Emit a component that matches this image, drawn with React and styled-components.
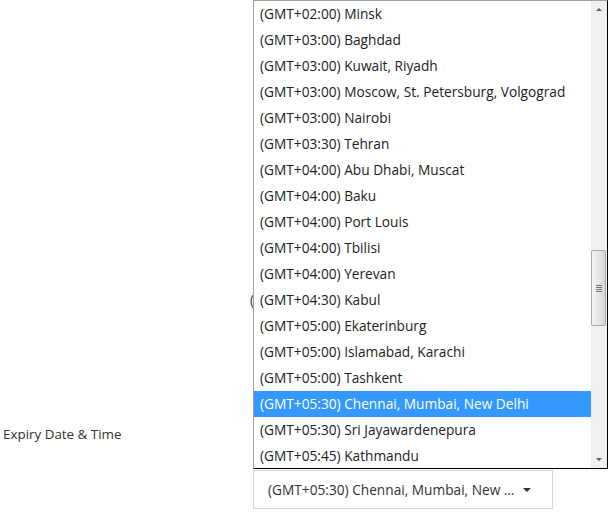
import React from 'react';
import styled, { createGlobalStyle } from 'styled-components';

const GlobalStyle = createGlobalStyle`
  html, body {
    margin: 0;
    padding: 0;
    background: #ffffff;
    font-family: "Open Sans", "Noto Sans", Arial, sans-serif;
  }
`;

const Page = styled.div`
  position: relative;
  width: 608px;
  height: 513px;
  overflow: hidden;
  background: #ffffff;
`;

const FormRow = styled.div`
  display: grid;
  grid-template-columns: 253px 300px;
  padding-top: 424px;
`;

const Label = styled.label`
  padding-left: 3px;
  font-size: 13.4px;
  line-height: 20px;
  color: #333333;
`;

const SelectBox = styled.div`
  margin-top: 46px;
  height: 39px;
  box-sizing: border-box;
  border: 1px solid #d6d6d6;
  display: flex;
  align-items: center;
  padding: 0 0 0 14px;
  font-size: 13.7px;
  color: #333333;
`;

const SelectText = styled.span`
  white-space: nowrap;
`;

const Caret = styled.span`
  width: 0;
  height: 0;
  margin-left: 8px;
  border-left: 4px solid transparent;
  border-right: 4px solid transparent;
  border-top: 4px solid #333333;
`;

const BehindGlyph = styled.span`
  position: absolute;
  left: 250px;
  top: 290px;
  font-size: 13.7px;
  color: #333333;
`;

const Popup = styled.div`
  position: absolute;
  left: 253px;
  top: 0;
  width: 355px;
  height: 469px;
  box-sizing: border-box;
  border-top: 1px solid #a0a0a0;
  border-left: 1px solid #a0a0a0;
  border-right: 1px solid #000000;
  border-bottom: 1px solid #000000;
  background: #ffffff;
  display: flex;
  overflow: hidden;
`;

const List = styled.ul`
  flex: 1;
  list-style: none;
  margin: 0;
  padding: 0;
  overflow: hidden;
`;

const Option = styled.li`
  height: 26px;
  line-height: 26px;
  padding-left: 6px;
  font-size: 13.7px;
  white-space: nowrap;
  color: ${({ selected }) => (selected ? '#ffffff' : '#222222')};
  background: ${({ selected }) => (selected ? '#3399ff' : 'transparent')};
`;

const Scrollbar = styled.div`
  width: 16px;
  background: #f0f0f0;
  display: flex;
  flex-direction: column;
  align-items: center;
`;

const Arrow = styled.div`
  height: 17px;
  width: 16px;
  display: flex;
  align-items: center;
  justify-content: center;
  &::after {
    content: '';
    border-left: 3px solid transparent;
    border-right: 3px solid transparent;
    ${({ down }) => (down ? 'border-top: 3px solid #606060;' : 'border-bottom: 3px solid #606060;')}
  }
`;

const Track = styled.div`
  flex: 1;
  width: 16px;
  display: flex;
  flex-direction: column;
`;

const Thumb = styled.div`
  margin-top: 232px;
  height: 76px;
  width: 15px;
  box-sizing: border-box;
  border: 1px solid #a8a8a8;
  border-radius: 2px;
  background: linear-gradient(to right, #f4f4f4, #e3e3e3 60%, #d6d6d6);
  display: flex;
  flex-direction: column;
  align-items: center;
  justify-content: center;
  gap: 1px;
`;

const Grip = styled.div`
  width: 6px;
  height: 1px;
  background: #707070;
`;

const zones = [
  '(GMT+02:00) Minsk',
  '(GMT+03:00) Baghdad',
  '(GMT+03:00) Kuwait, Riyadh',
  '(GMT+03:00) Moscow, St. Petersburg, Volgograd',
  '(GMT+03:00) Nairobi',
  '(GMT+03:30) Tehran',
  '(GMT+04:00) Abu Dhabi, Muscat',
  '(GMT+04:00) Baku',
  '(GMT+04:00) Port Louis',
  '(GMT+04:00) Tbilisi',
  '(GMT+04:00) Yerevan',
  '(GMT+04:30) Kabul',
  '(GMT+05:00) Ekaterinburg',
  '(GMT+05:00) Islamabad, Karachi',
  '(GMT+05:00) Tashkent',
  '(GMT+05:30) Chennai, Mumbai, New Delhi',
  '(GMT+05:30) Sri Jayawardenepura',
  '(GMT+05:45) Kathmandu',
];

const selectedZone = '(GMT+05:30) Chennai, Mumbai, New Delhi';

const App = () => (
  <>
    <GlobalStyle />
    <Page>
      <FormRow>
        <Label>Expiry Date &amp; Time</Label>
        <SelectBox title={selectedZone}>
          <SelectText>(GMT+05:30) Chennai, Mumbai, New …</SelectText>
          <Caret />
        </SelectBox>
      </FormRow>
      <BehindGlyph>(</BehindGlyph>
      <Popup>
        <List>
          {zones.map((z) => (
            <Option key={z} selected={z === selectedZone}>{z}</Option>
          ))}
        </List>
        <Scrollbar>
          <Arrow />
          <Track>
            <Thumb>
              <Grip />
              <Grip />
              <Grip />
              <Grip />
            </Thumb>
          </Track>
          <Arrow down />
        </Scrollbar>
      </Popup>
    </Page>
  </>
);

export default App;
